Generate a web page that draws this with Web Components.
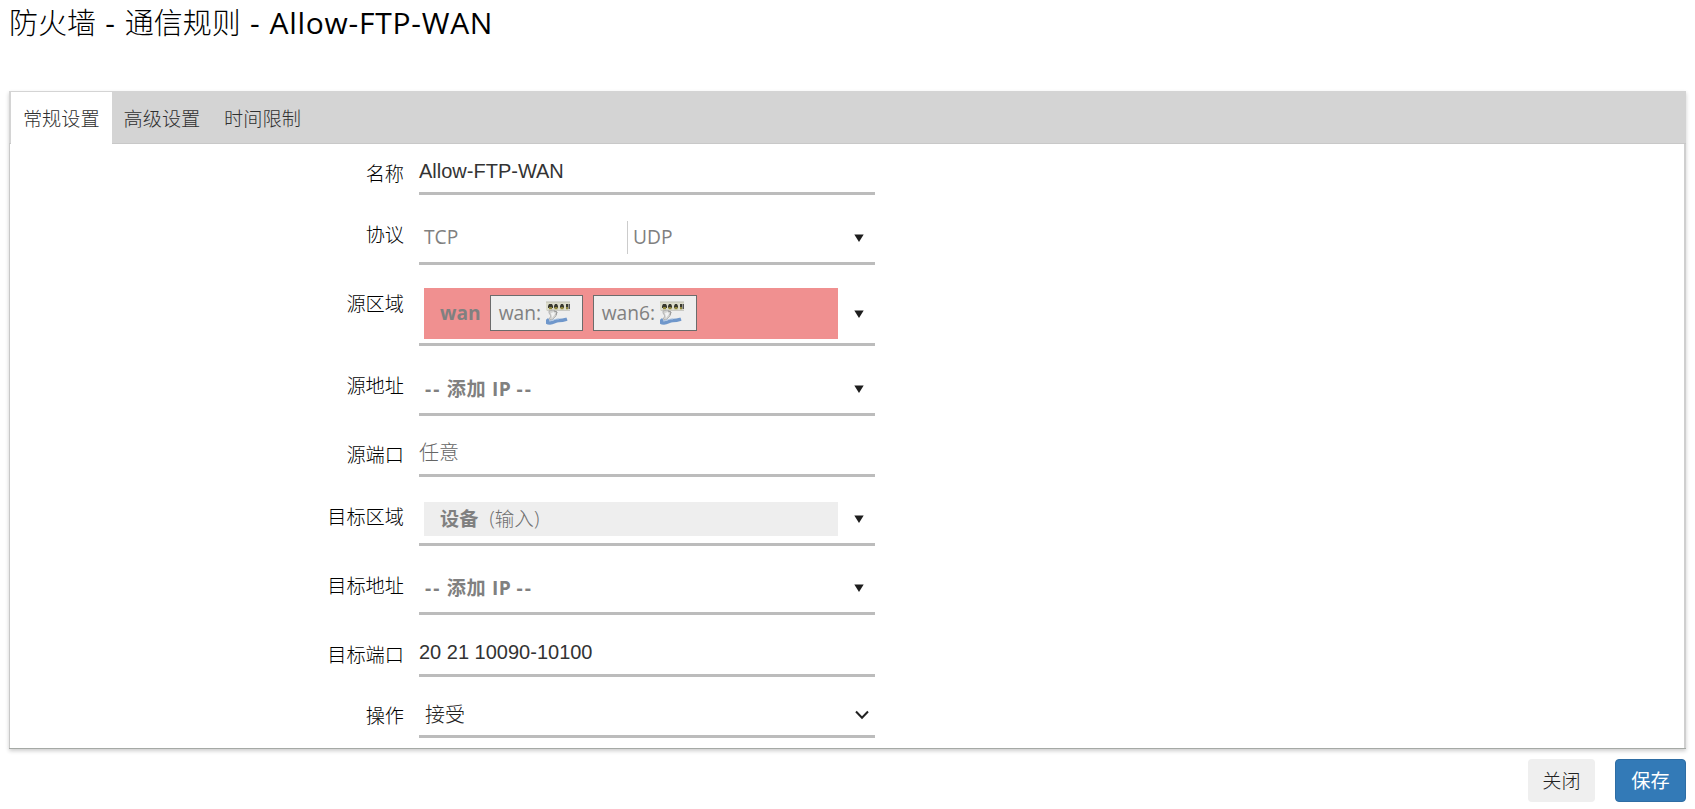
<!DOCTYPE html>
<html lang="zh-CN">
<head>
<meta charset="utf-8">
<title>防火墙 - 通信规则</title>
<style>
html,body{margin:0;background:#fff}
body{height:809px;overflow:hidden;font-family:"Open Sans","Noto Sans CJK SC",sans-serif;font-size:19.2px;color:#000}
</style>
</head>
<body>
<rule-page></rule-page>
<script>
const define = (name, html, setup) => customElements.define(name, class extends HTMLElement {
  constructor() {
    super();
    this.attachShadow({ mode: 'open' }).innerHTML = html;
  }
  connectedCallback() { if (setup) setup(this, this.shadowRoot); }
});

define('tab-item', `<style>
:host{display:flex;align-items:center;justify-content:center;width:100.6px;height:52px;font-weight:300;color:#303030;white-space:nowrap;line-height:26px}
:host([active]){background:#fff}
span{position:relative;top:1px}
</style><span><slot></slot></span>`);

define('tab-bar', `<style>
:host{display:flex;box-sizing:border-box;height:53px;padding:1px 0 0 2px;background:#d4d4d4;box-shadow:inset 0 -1px #c8c8c8}
</style><slot></slot>`);

/* label + control; "height" is the full row height, ending at the underline */
define('form-row', `<style>
:host{display:flex;align-items:stretch}
label{width:394px;margin-right:15px;text-align:right;font-weight:300;line-height:28px;white-space:nowrap}
div{width:456px;box-sizing:border-box;border-bottom:3px solid #bcbcbc;display:flex;align-items:center}
</style><label></label><div><slot></slot></div>`, (el, root) => {
  const l = root.querySelector('label');
  l.textContent = el.getAttribute('label');
  l.style.paddingTop = (el.getAttribute('lead') || 26) + 'px';
  el.style.height = el.getAttribute('height') + 'px';
  root.querySelector('div').style.paddingTop = (el.getAttribute('pad') || 0) + 'px';
});

define('text-value', `<style>
:host{display:block;font-family:"Liberation Sans","Noto Sans CJK SC",sans-serif;font-weight:300;font-size:20px;line-height:28px;color:#333;white-space:pre}
:host([placeholder]){color:#656565}
</style><slot></slot>`);

define('drop-down', `<style>
:host{display:flex;align-items:center;width:100%;color:#808080;line-height:28px}
.v{flex:0 0 414px;margin-left:5px;display:flex;align-items:center;white-space:nowrap}
svg{margin-left:16px;display:block}
</style><div class="v"><slot></slot></div><svg width="10" height="8"><path d="M0.300 0.500H9.700L5 8Z" fill="#1d1d1d"/></svg>`);

define('add-ip', `<style>
:host{display:block;font-weight:700;white-space:pre;padding-left:1px;word-spacing:.5px}
i{font-style:normal;letter-spacing:2px}
span{letter-spacing:.4px}
</style><i>--</i> <span>添加 IP</span> <i>--</i>`);

define('proto-item', `<style>
:host{display:block;box-sizing:border-box;height:33px;line-height:32px;width:203px}
:host([rest]){width:211px;border-left:1px solid #ccc;padding-left:5px}
</style><slot></slot>`);

define('zone-box', `<style>
:host{display:flex;align-items:center;box-sizing:border-box;width:414px;height:34px;padding-left:16px;background:#eee;font-weight:300}
:host([wan]){height:51px;background:#f09090;padding-bottom:1px}
::slotted(b){margin-right:9px;font-weight:700}
::slotted(span){margin-left:2px;font-size:19.6px;color:#707070}
</style><slot></slot>`);

define('net-icon', `<style>:host{display:block;width:24px;height:24px}svg{display:block}</style>
<svg width="24" height="24" viewBox="0 0 24 24">
<path d="M0 1H24V9.500H0Z" fill="#dcdccb"/><path d="M0 1H24" stroke="#bcbcb0" stroke-width="1"/><path d="M1 9.500H24" stroke="#c9c9c4"/>
<g fill="#3a3a30"><path d="M2 5l1-2h3l1 2v2H2zM8 5l1-2h2l1 2v2H8zM14 5l1-2h2l1 2v2h-4zM20 3h2v4h-2z"/><path d="M22.500 3h1.500v5h-1.500z" fill="#555"/></g>
<g fill="#8f863a"><path d="M3 6h3v2.200H3zM8.500 6h3v2.200h-3zM14.500 6h3v2.200h-3zM20 6h2v2.200h-2z"/></g>
<path d="M3 10l4-1 4 2-1 4-4 4-3-1 2-3-2-3z" fill="#d2d2d0" stroke="#aaa" stroke-width=".8"/><path d="M5 12l3-1 1 2-3 4z" fill="#f2f2f2"/><path d="M8 10l3 1-1 3" fill="none" stroke="#999"/>
<path d="M3 18.500c-3 2-3 3.500 1 3.500s5-2.500 9-2.500 5-.5 8-1.500" fill="none" stroke="#6f97cb" stroke-width="3.400"/><path d="M3 20c4-1 7-2 10-2" fill="none" stroke="#a8c2e2" stroke-width="1"/>
</svg>`);

define('iface-badge', `<style>
:host{display:flex;align-items:center;box-sizing:border-box;height:36px;padding:0 12px 0 8px;margin-right:10px;border:1px solid #6c6c6c;background:#eee;font-weight:400}
span{white-space:nowrap}
net-icon{margin-left:auto}
</style><span><slot></slot></span><net-icon></net-icon>`);

define('select-value', `<style>
:host{display:flex;align-items:center;justify-content:space-between;width:100%;box-sizing:border-box;padding:0 6px;font-weight:300;font-size:20px;line-height:28px;color:#222}
svg{display:block}
</style><slot></slot><svg width="14" height="10"><path d="M1 1.500L7 7.800L13 1.500" fill="none" stroke="#222" stroke-width="2"/></svg>`);

define('push-button', `<style>
:host{display:flex;align-items:center;justify-content:center;box-sizing:border-box;width:67px;height:43px;padding-bottom:2px;border-radius:4px;background:#efefef;color:#222;font-weight:300}
:host([primary]){width:71px;background:#337ab7;border:1px solid #2e6da4;color:#fff;font-weight:400}
</style><slot></slot>`);

define('rule-page', `<style>
:host{display:block;width:1695px;height:809px;overflow:hidden}
h1{margin:0;padding:3px 0 0 9px;height:88px;box-sizing:content-box;font-size:29px;font-weight:300;line-height:40px;white-space:pre}
h1 span{font-weight:400;font-size:30px;letter-spacing:.75px;word-spacing:.6px;line-height:1}
section{margin:0 9px;height:658px;box-sizing:border-box;border-bottom:1px solid #a5a9a5;box-shadow:0 2px 4px rgba(0,0,0,.2)}
.rows{height:604px;box-sizing:border-box;border:solid #cfcfcf;border-width:0 2px 0 1px;border-left-color:#c9c9c9}
footer{display:flex;justify-content:flex-end;gap:20px;padding:10px 9px 0}
</style>
<h1>防火墙<span> - </span>通信规则<span> - Allow-FTP-WAN</span></h1>
<section>
<tab-bar><tab-item active>常规设置</tab-item><tab-item>高级设置</tab-item><tab-item>时间限制</tab-item></tab-bar>
<div class="rows">
<form-row label="名称" height="51" lead="16" pad="6"><text-value>Allow-FTP-WAN</text-value></form-row>
<form-row label="协议" height="70" pad="18"><drop-down><proto-item>TCP</proto-item><proto-item rest>UDP</proto-item></drop-down></form-row>
<form-row label="源区域" height="81" lead="25" pad="19"><drop-down><zone-box wan><b>wan</b><iface-badge style="width:93px">wan:</iface-badge><iface-badge style="width:104px">wan6:</iface-badge></zone-box></drop-down></form-row>
<form-row label="源地址" height="70" pad="19"><drop-down><add-ip></add-ip></drop-down></form-row>
<form-row label="源端口" height="61" lead="25" pad="15"><text-value placeholder>任意</text-value></form-row>
<form-row label="目标区域" height="69" pad="18"><drop-down><zone-box><b>设备</b><span>(输入)</span></zone-box></drop-down></form-row>
<form-row label="目标地址" height="69" lead="26" pad="18"><drop-down><add-ip></add-ip></drop-down></form-row>
<form-row label="目标端口" height="62" lead="26" pad="15"><text-value>20 21 10090-10100</text-value></form-row>
<form-row label="操作" height="61" lead="25" pad="18"><select-value>接受</select-value></form-row>
</div>
</section>
<footer><push-button>关闭</push-button><push-button primary>保存</push-button></footer>`);
</script>
</body>
</html>
